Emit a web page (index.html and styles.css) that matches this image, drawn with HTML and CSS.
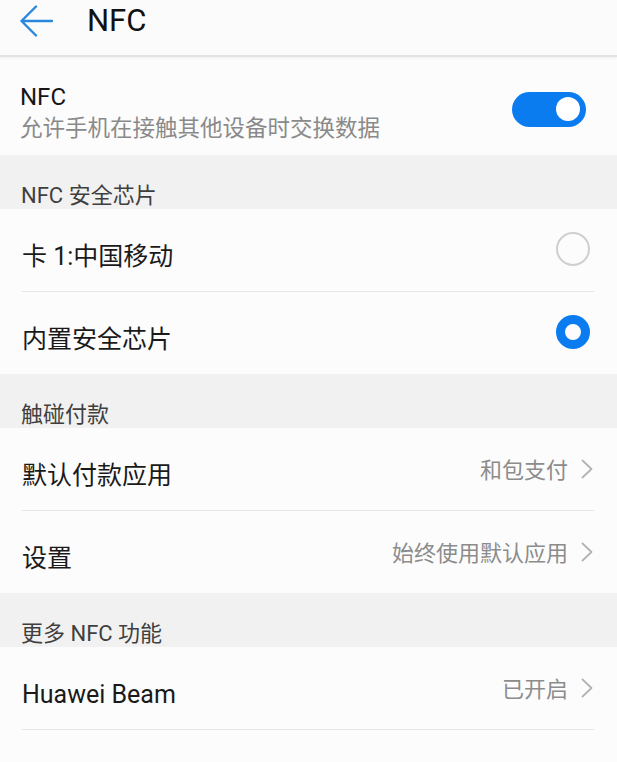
FILE: index.html
```html
<!DOCTYPE html>
<html lang="zh-CN">
<head>
<meta charset="utf-8">
<title>NFC</title>
<link rel="stylesheet" href="styles.css">
</head>
<body>
<div class="screen">
  <header class="appbar">
    <svg class="back" viewBox="0 0 33 32" aria-hidden="true">
      <path d="M16 1.5 L1.5 16 L16 30.5 M1.5 16 H32" fill="none" stroke="#2b87db" stroke-width="2.4" stroke-linecap="round" stroke-linejoin="round"/>
    </svg>
    <h1 class="title">NFC</h1>
  </header>

  <section class="nfc-row">
    <div class="nfc-text">
      <div class="nfc-title">NFC</div>
      <div class="nfc-sub">允许手机在接触其他设备时交换数据</div>
    </div>
    <span class="switch"><span class="knob"></span></span>
  </section>

  <div class="group-title">NFC 安全芯片</div>
  <div class="item divided">
    <span class="item-title">卡 1:中国移动</span>
    <span class="radio"></span>
  </div>
  <div class="item">
    <span class="item-title">内置安全芯片</span>
    <span class="radio checked"></span>
  </div>

  <div class="group-title">触碰付款</div>
  <div class="item divided">
    <span class="item-title">默认付款应用</span>
    <span class="value">和包支付</span>
    <svg class="chev" viewBox="0 0 12 20" aria-hidden="true"><path d="M1.5 1.5 L10.5 10 L1.5 18.5" fill="none" stroke="#b3b3b3" stroke-width="1.8" stroke-linecap="round" stroke-linejoin="round"/></svg>
  </div>
  <div class="item">
    <span class="item-title">设置</span>
    <span class="value">始终使用默认应用</span>
    <svg class="chev" viewBox="0 0 12 20" aria-hidden="true"><path d="M1.5 1.5 L10.5 10 L1.5 18.5" fill="none" stroke="#b3b3b3" stroke-width="1.8" stroke-linecap="round" stroke-linejoin="round"/></svg>
  </div>

  <div class="group-title">更多 NFC 功能</div>
  <div class="item divided">
    <span class="item-title">Huawei Beam</span>
    <span class="value">已开启</span>
    <svg class="chev" viewBox="0 0 12 20" aria-hidden="true"><path d="M1.5 1.5 L10.5 10 L1.5 18.5" fill="none" stroke="#b3b3b3" stroke-width="1.8" stroke-linecap="round" stroke-linejoin="round"/></svg>
  </div>
</div>
</body>
</html>
```

FILE: styles.css
```css
html, body {
  margin: 0;
  padding: 0;
  background: #fcfcfc;
}

.screen {
  width: 617px;
  height: 762px;
  overflow: hidden;
  background: #fcfcfc;
  font-family: Roboto, "Noto Sans CJK SC", sans-serif;
  color: #1a1a1a;
}

.appbar {
  height: 42px;
  padding-bottom: 13px;
  display: flex;
  align-items: center;
  background: #fbfbfb;
  border-bottom: 2px solid #e2e2e2;
  box-shadow: 0 1px 3px rgba(0, 0, 0, 0.06);
}

.back {
  width: 33px;
  height: 32px;
  margin-left: 20px;
  flex: none;
}

.title {
  margin: 0 0 0 34px;
  font-size: 31px;
  font-weight: 400;
  line-height: 42px;
  color: #111;
}

.nfc-row {
  display: flex;
  align-items: center;
  padding: 25px 31px 13px 20px;
}

.nfc-text {
  flex: 1;
}

.nfc-title {
  font-size: 24px;
  line-height: 30px;
  color: #161616;
}

.nfc-sub {
  margin-top: 2px;
  font-size: 22.5px;
  line-height: 28px;
  color: #8a8a8a;
}

.switch {
  width: 74px;
  height: 35px;
  box-sizing: border-box;
  border-radius: 18px;
  background: #0b7cf0;
  display: flex;
  align-items: center;
  justify-content: flex-end;
  padding: 0 6px;
  margin-top: -6px;
}

.knob {
  width: 24px;
  height: 24px;
  border-radius: 50%;
  background: #fff;
}

.group-title {
  height: 26px;
  padding: 28px 22px 0 21px;
  background: #f1f1f1;
  font-size: 22px;
  line-height: 26px;
  color: #3f3f3f;
}

.item {
  height: 69px;
  padding-top: 13px;
  margin: 0 23px 0 22px;
  display: flex;
  align-items: center;
}

.item.divided {
  border-bottom: 1px solid #e6e6e6;
}

.item-title {
  flex: 1;
  font-size: 25px;
  line-height: 32px;
  color: #1a1a1a;
}

.value {
  font-size: 22px;
  line-height: 28px;
  color: #8c8c8c;
  margin-right: 13px;
  margin-top: -9px;
}

.chev {
  width: 12px;
  height: 20px;
  flex: none;
  margin-right: 1px;
  margin-top: -14px;
}

.radio {
  width: 34px;
  height: 34px;
  box-sizing: border-box;
  border-radius: 50%;
  border: 2px solid #cfcfcf;
  margin-right: 4px;
  margin-top: -15px;
  flex: none;
}

.radio.checked {
  border: 9px solid #0a7cf0;
}
```
